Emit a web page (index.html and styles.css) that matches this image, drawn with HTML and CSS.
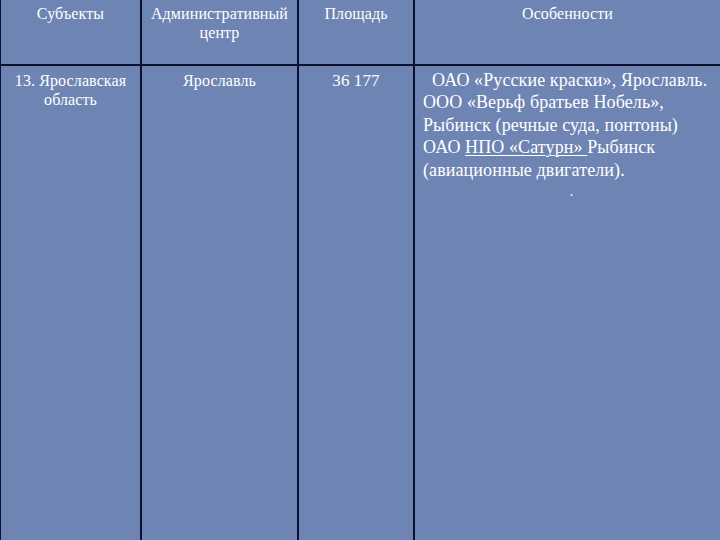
FILE: index.html
```html
<!DOCTYPE html>
<html lang="ru">
<head>
<meta charset="utf-8">
<link rel="stylesheet" href="styles.css">
</head>
<body>
<div class="table">
  <div class="cell head c1">Субъекты</div>
  <div class="cell head c2">Административный центр</div>
  <div class="cell head c3">Площадь</div>
  <div class="cell head c4">Особенности</div>
  <div class="cell body c1">13. Ярославская область</div>
  <div class="cell body c2">Ярославль</div>
  <div class="cell body c3 num">36 177</div>
  <div class="cell body c4 desc">
    <p class="para"><span class="indent"></span>ОАО «Русские краски», Ярославль.<br>ООО «Верьф братьев Нобель»,<br>Рыбинск (речные суда, понтоны)<br>ОАО <span class="link">НПО «Сатурн» </span>Рыбинск<br>(авиационные двигатели).</p>
    <p class="dot">.</p>
  </div>
</div>
</body>
</html>
```

FILE: styles.css
```css
html, body {
  margin: 0;
  padding: 0;
}
body {
  width: 720px;
  height: 540px;
  overflow: hidden;
  background: #6e84b3;
  font-family: "Liberation Serif", "Times New Roman", serif;
  color: #ffffff;
}
.table {
  display: grid;
  grid-template-columns: 142px 157px 116px 1fr;
  grid-template-rows: 66px 474px;
  width: 720px;
  height: 540px;
  background: #6e84b3;
}
.cell {
  box-sizing: border-box;
  text-align: center;
  font-size: 16px;
  line-height: 19px;
  letter-spacing: 0.1px;
  border-right: 2px solid #0b1130;
}
.c1 {
  border-left: 1px solid #0b1130;
}
.c4 {
  border-right: none;
}
.head {
  border-bottom: 2px solid #0b1130;
  padding: 4px 2px 0;
}
.body {
  padding: 5px 2px 0;
}
.num {
  font-size: 17px;
  padding-top: 5px;
}
.desc {
  font-size: 18px;
  line-height: 22.4px;
  letter-spacing: 0.1px;
  padding: 3px 0 0 8px;
  text-align: left;
  white-space: nowrap;
}
.indent {
  display: inline-block;
  width: 9px;
}
.para {
  margin: 0;
}
.link {
  text-decoration: underline;
  text-decoration-thickness: 1px;
  text-underline-offset: 2px;
}
.dot {
  margin: 0;
  text-align: center;
  font-size: 14px;
  line-height: 22px;
}
```
